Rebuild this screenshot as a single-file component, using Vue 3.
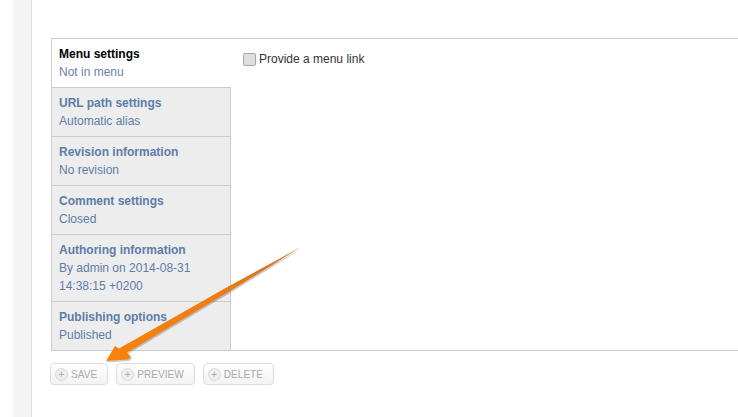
<script setup>
const tabs = [
  { title: 'Menu settings', lines: ['Not in menu'], active: true },
  { title: 'URL path settings', lines: ['Automatic alias'] },
  { title: 'Revision information', lines: ['No revision'] },
  { title: 'Comment settings', lines: ['Closed'] },
  { title: 'Authoring information', lines: ['By admin on 2014-08-31', '14:38:15 +0200'] },
  { title: 'Publishing options', lines: ['Published'] },
]
const buttons = ['SAVE', 'PREVIEW', 'DELETE']
</script>

<template>
  <div class="page">
    <div class="gutter"></div>
    <div class="content">
      <div class="panel">
        <ul class="tabs">
          <li v-for="tab in tabs" :key="tab.title" class="tab" :class="{ active: tab.active }">
            <strong>{{ tab.title }}</strong>
            <span v-for="line in tab.lines" :key="line">{{ line }}</span>
          </li>
        </ul>
        <div class="pane">
          <label class="check"><input type="checkbox" />Provide a menu link</label>
        </div>
      </div>
      <div class="actions">
        <button v-for="b in buttons" :key="b" class="btn" type="button">
          <span class="plus">+</span><span class="label">{{ b }}</span>
        </button>
      </div>
    </div>
    <svg class="arrow" width="738" height="417" viewBox="0 0 738 417">
      <defs>
        <linearGradient id="ar" x1="301" y1="247" x2="106" y2="360" gradientUnits="userSpaceOnUse">
          <stop offset="0" stop-color="#d2701f" />
          <stop offset="0.5" stop-color="#ef7d14" />
          <stop offset="1" stop-color="#f8820c" />
        </linearGradient>
      </defs>
      <path d="M301 247 L230 291 L127 352.500 L131 357 L128 359.500 L106 361 L115 346 L119 348.500 L230 285.500 Z" fill="#000" opacity=".2" transform="translate(1 1.500)" />
      <path d="M301 247 L230 291 L127 352.500 L131 357 L128 359.500 L106 361 L115 346 L119 348.500 L230 285.500 Z" fill="url(#ar)" />
    </svg>
  </div>
</template>

<style>
html, body { margin: 0; background: #fff; overflow: hidden; }
</style>

<style scoped>
.page {
  position: relative;
  display: flex;
  width: 738px;
  height: 417px;
  overflow: hidden;
  background: #fff;
  font-family: "Liberation Sans", Arial, sans-serif;
  font-size: 12px;
  line-height: 18px;
}
.gutter {
  flex: none;
  width: 18px;
  margin-left: 13px;
  background: #f4f4f4;
  border-right: 1px solid #dedede;
}
.content {
  flex: none;
  width: 706px;
  padding: 38px 0 0 18px;
  box-sizing: border-box;
}
.panel {
  display: flex;
  width: 700px;
  margin-left: 1px;
  border: 1px solid #ccc;
  border-right: 0;
  background: #fff;
}
.tabs {
  flex: none;
  width: 178px;
  margin: 0;
  padding: 0;
  list-style: none;
  background: #ededed;
  border-right: 1px solid #ccc;
}
.tab {
  display: flex;
  flex-direction: column;
  padding: 6px 7px;
  color: #5c7da8;
  border-top: 1px solid #ccc;
}
.tab:first-child { border-top: 0; }
.tab.active {
  color: #6a83a6;
  background: #fff;
  margin-right: -1px;
}
.tab.active strong { color: #000; }
.tab strong { font-weight: bold; }
.pane {
  flex: 1;
  padding: 11px 12px;
}
.check {
  display: flex;
  align-items: center;
  height: 18px;
  color: #333;
}
.check input {
  appearance: none;
  box-sizing: border-box;
  width: 13px;
  height: 13px;
  margin: 0 3px 0 0;
  background: #dedede;
  border: 1px solid #a8a8a8;
  border-radius: 2px;
}
.actions {
  display: flex;
  gap: 8px;
  margin-top: 12px;
}
.btn {
  display: flex;
  align-items: center;
  height: 22px;
  padding: 0 10px 0 4px;
  font: 10.100px/1 "Liberation Sans", Arial, sans-serif;
  color: #aaa;
  background: linear-gradient(#fefefe, #f3f3f3);
  border: 1px solid #ddd;
  border-radius: 4px;
}
.label {
  margin-top: 2px;
}
.plus {
  flex: none;
  box-sizing: border-box;
  width: 13px;
  height: 13px;
  margin-right: 3px;
  border: 1px solid #d8d8d8;
  border-radius: 50%;
  background: #eee;
  color: #aaa;
  font-size: 10px;
  line-height: 11px;
  text-align: center;
}
.arrow {
  position: absolute;
  left: 0;
  top: 0;
  pointer-events: none;
}
</style>
